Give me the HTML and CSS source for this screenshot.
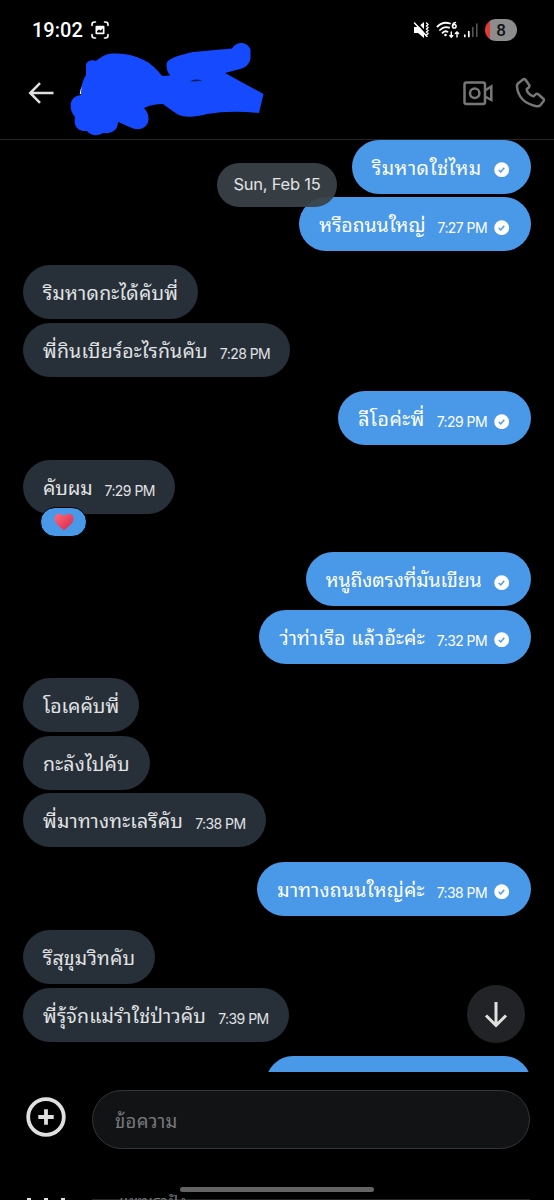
FILE: index.html
```html
<!DOCTYPE html>
<html lang="th">
<head>
<meta charset="utf-8">
<title>Chat</title>
<link rel="stylesheet" href="styles.css">
</head>
<body>
<svg class="defs" width="0" height="0"><defs>
<symbol id="tick" viewBox="0 0 16 16"><circle cx="8" cy="8" r="7.7" fill="#fff"/><path d="M5 8.3l2 2 3.7-4.3" fill="none" stroke="#4a99e9" stroke-width="1.5"/></symbol>
</defs></svg>
<div class="screen">
<header class="top">
  <div class="status">
    <span class="clock">19:02</span>
    <svg class="shot" width="18" height="18" viewBox="0 0 18 18" fill="none" stroke="#fff" stroke-width="1.6" stroke-linecap="round"><path d="M1 4.500V3.500Q1 1 3.500 1H4.500M13.500 1h1Q17 1 17 3.500V4.500M17 13.500v1Q17 17 14.500 17H13.500M4.500 17H3.500Q1 17 1 14.500V13.500"/><path d="M5.500 4.800h7a1 1 0 0 1 1 1v6.400a1 1 0 0 1-1 1h-7a1 1 0 0 1-1-1V5.800a1 1 0 0 1 1-1z" fill="#fff" stroke="none"/><path d="M6 11.500V10l2-1.500 1.500 1L11.800 7.500v4z" fill="#000" stroke="none"/></svg>
    <svg class="sysicons" width="68" height="20" viewBox="0 0 68 20" fill="none" stroke="#fff" stroke-width="1.500" stroke-linecap="round">
      <path d="M1 7h4l6-5v16l-6-5H1z" fill="#fff" stroke="none"/><path d="M2.500 1.500l12.500 13.500" stroke="#000" stroke-width="2"/><path d="M1.500 3l12.500 13.500"/><path d="M13.500 3l1.500 1.500-1.500 1.500L15 7.500 13.500 9l1.500 1.500-1.500 1.500 1.500 1.500-1.500 1.500" stroke-width="1.400"/>
      <path d="M24.500 6.500Q30 1 37 3.500M27 10q4-4.300 9-2.300M29.500 12.800q2.500-2.500 5-1" stroke-width="1.800"/><circle cx="32.500" cy="15" r="1.300" fill="#fff" stroke="none"/>
      <path d="M42.500 2.500Q39.500 3 39.500 6.300"/><circle cx="41.300" cy="6.300" r="1.800"/>
      <path d="M38.300 12v5M36.800 15.500l1.500 1.700 1.500-1.700M44 17v-5M42.300 13.500L44 12l1.600 1.500" stroke-width="1.400"/>
      <path d="M51.800 15v1.500M55.800 11.500v5" stroke-width="1.700"/><path d="M59.800 7.500v9M63.800 4v12.500" stroke="#555" stroke-width="1.600"/>
    </svg>
    <span class="battery">8</span>
  </div>
  <div class="bar">
    <svg class="back" width="26" height="22" viewBox="0 0 26 22" fill="none" stroke="#e0e0e0" stroke-width="2.500"><path d="M12 1.200L2.200 11 12 20.800M2.500 11H25.500"/></svg>
    <svg class="scribble" width="194" height="94" viewBox="70 42 194 94"><path d="M80.500 94q0-4 3-9M82.500 94.500h1" stroke="#fff" stroke-width="1.500" fill="none"/><path fill="#164aff" d="M86 67C85 62 91 59 96 61C104 54 110 53 117 53.500C137 54 152 62 162 76L170 75.500Q165 69 167 62C172 57 180 55 193 52L232 48.500C236 41 248 41 250.500 50V58C250 64 245 68 240 69L225 73L263.500 94L259 113Q230 110 207 114C192 118 182 118 174 112L163 104Q152 104 144 108C151 115 150 127 140 129C133 130 126 125 118 122C118 130 112 134 103 133C96 137 90 135 87 131C78 132 73 126 75 117C68 109 69 96 81 95Q81 82 86 75Z"/><path d="M190 81.500q6-3.500 12-.5z" fill="#052045"/></svg>
    <svg class="video" width="31" height="25" viewBox="0 0 31 25" fill="none" stroke="#777" stroke-width="2.500"><rect x="1.500" y="1.500" width="20.500" height="21.500" rx="2"/><circle cx="11.700" cy="12.200" r="4.700"/><path d="M22 9.500l6.300-4v13.500L22 15.500"/></svg>
    <svg class="phone" width="32" height="32" viewBox="0 0 32 32" fill="none" stroke="#777" stroke-width="2.500" stroke-linejoin="round"><path d="M3 6.500L8 2.500Q9.500 1.500 10.700 3L14 7.700Q15 9.300 13.700 10.500L11.700 12.300Q12 16.500 18.500 19.300L20.700 17.300Q22 16.200 23.300 17.300L28.300 21.700Q29.500 23 28.300 24.500L25.500 28Q24.300 29.700 21.500 29.200Q3.500 25.500 2 9.500Q1.800 7.700 3 6.500z"/></svg>
  </div>
</header>
<main class="thread">
  <div class="day">Sun, Feb 15</div>
  <div class="group out">
    <div class="msg"><span class="text wide">ริมหาดใช่ไหม</span><svg class="tick"><use href="#tick"/></svg></div>
    <div class="msg"><span class="text snug">หรือถนนใหญ่</span><time>7:27 PM</time><svg class="tick"><use href="#tick"/></svg></div>
  </div>
  <div class="group">
    <div class="msg"><span class="text">ริมหาดกะได้คับพี่</span></div>
    <div class="msg"><span class="text">พี่กินเบียร์อะไรกันคับ</span><time>7:28 PM</time></div>
  </div>
  <div class="group out">
    <div class="msg"><span class="text wide">ลีโอค่ะพี่</span><time>7:29 PM</time><svg class="tick"><use href="#tick"/></svg></div>
  </div>
  <div class="group reacted">
    <div class="msg"><span class="text tight">คับผม</span><time>7:29 PM</time><span class="reaction"><svg width="20" height="18" viewBox="0 0 20 18"><defs><linearGradient id="heart" x2="1" y2="1"><stop stop-color="#ff6b79"/><stop offset="1" stop-color="#d52349"/></linearGradient></defs><path d="M10 17.500C6 13.500.5 10.500.5 5.500C.5 0 7.500-1 10 3.500C12.500-1 19.500 0 19.500 5.500C19.500 10.500 14 13.500 10 17.500z" fill="url(#heart)"/></svg></span></div>
  </div>
  <div class="group out">
    <div class="msg"><span class="text tight">หนูถึงตรงที่มันเขียน</span><svg class="tick"><use href="#tick"/></svg></div>
    <div class="msg"><span class="text">ว่าท่าเรือ แล้วอ้ะค่ะ</span><time>7:32 PM</time><svg class="tick"><use href="#tick"/></svg></div>
  </div>
  <div class="group">
    <div class="msg"><span class="text snug">โอเคคับพี่</span></div>
    <div class="msg"><span class="text">กะลังไปคับ</span></div>
    <div class="msg"><span class="text">พี่มาทางทะเลรึคับ</span><time>7:38 PM</time></div>
  </div>
  <div class="group out">
    <div class="msg"><span class="text">มาทางถนนใหญ่ค่ะ</span><time>7:38 PM</time><svg class="tick"><use href="#tick"/></svg></div>
  </div>
  <div class="group">
    <div class="msg"><span class="text">รึสุขุมวิทคับ</span></div>
    <div class="msg"><span class="text">พี่รุ้จักแม่รำใช่ป่าวคับ</span><time>7:39 PM</time></div>
  </div>
  <div class="group out"><div class="msg next"></div></div>
  <button class="down"><svg width="24" height="27" viewBox="0 0 24 27" fill="none" stroke="#e0e0e0" stroke-width="3"><path d="M12 1v23M2 14.500l10 10 10-10"/></svg></button>
</main>
<footer class="composer">
  <svg class="plus" width="40" height="40" viewBox="0 0 40 40" fill="none" stroke="#e0e0e0" stroke-width="3.800"><circle cx="20" cy="20" r="17.800"/><path d="M20 12.300v15.400M12.300 20h15.400"/></svg>
  <div class="field">ข้อความ</div>
</footer>
<div class="edge"><i class="handle"></i><span class="dots"><i></i><i></i><i></i></span><div class="under"></div><span class="peek">แชทเราฝัง</span></div>
</div>
</body>
</html>
```
FILE: styles.css
```css
*{box-sizing:border-box}
body{margin:0;background:#000;color:#e0e2e4;font-family:Inter,"Noto Sans Thai Looped",Loma,Waree,"Noto Sans Thai","Noto Sans",sans-serif}
.defs{position:absolute}
.screen{width:554px;height:1200px;overflow:hidden;display:flex;flex-direction:column;background:#000}
.top{height:139.500px;flex:none;border-bottom:1px solid #242628}
.status{height:60px;display:flex;align-items:center;padding:0 37px 0 32px}
.clock{font:500 20px/24px Roboto,sans-serif;color:#fff;width:50px;white-space:nowrap}
.shot{margin-left:9px}
.sysicons{margin-left:304px;flex:none}
.battery{width:32px;height:22px;margin-left:4px;border-radius:11px;background:linear-gradient(90deg,#e13b38 5px,#8d8d8d 5px);color:#111;font:500 17px/22px Roboto,sans-serif;text-align:center;flex:none}
.bar{height:78px;display:flex;align-items:center;padding-left:28px}
.back{flex:none;margin-top:-12px}
.scribble{flex:none;margin:-21px 0 0 16px}
.video{flex:none;margin:-11px 0 0 199px}
.phone{flex:none;margin:-12px 0 0 21px}
.thread{height:932.500px;flex:none;padding:0 23.500px 0 23px;position:relative;overflow:hidden;display:flex;flex-direction:column;gap:14.400px}
.group{display:flex;flex-direction:column;align-items:flex-start;gap:3.600px;flex:none}
.group.out{align-items:flex-end}
.reacted{margin-bottom:23.900px}
.msg{height:54px;border-radius:27px;background:#273038;display:flex;align-items:baseline;padding:0 20px;white-space:nowrap;position:relative}
.text{font-size:19.500px;line-height:57px;letter-spacing:.2px}
.text.wide{letter-spacing:.45px}
.text.snug{letter-spacing:-.03px}
.text.tight{letter-spacing:-.12px}
.out .msg{background:#4a99e9;color:#fff;padding-right:21px}
time{font-size:14px;letter-spacing:-.55px;margin-left:12px;transform:translateY(1px)}
.tick{width:15.400px;height:15.400px;margin-left:7px;transform:translateY(3px)}
.text + .tick{margin-left:12.500px}
.out .msg.next{width:265px}
.day{position:absolute;z-index:2;left:217px;top:23px;width:120px;height:44px;border-radius:22px;background:rgba(57,65,72,.95);font-size:16.500px;line-height:43px;text-align:center;letter-spacing:-.25px}
.reaction{position:absolute;left:17px;top:47px;width:47px;height:30px;border:1px solid #000;border-radius:15px;background:#4a99e9;display:flex;align-items:center;justify-content:center}
.down{position:absolute;right:29px;top:845.500px;width:58px;height:58px;border:0;border-radius:50%;background:#222326;display:flex;align-items:center;justify-content:center}
.composer{height:77px;flex:none;padding:18px 24px 0 26px;display:flex}
.plus{flex:none;margin-top:7px}
.field{width:438px;height:59px;margin-left:26px;flex:none;border:1.500px solid #343536;border-radius:30px;background:#121315;color:#77797c;font-size:18.500px;line-height:60px;letter-spacing:.3px;padding-left:22px}
.edge{height:51px;flex:none;position:relative;overflow:hidden}
.handle{position:absolute;left:180px;top:38px;width:194px;height:5px;border-radius:3px;background:#646464}
.dots{position:absolute;left:27px;top:49px;display:flex;gap:13px}
.dots i{width:4px;height:4px;background:#ddd}
.under{position:absolute;left:92px;top:50px;width:438px;height:1px;background:#242526}
.peek{position:absolute;left:119px;top:37.500px;font-size:16px;line-height:28px;color:#77797c;white-space:nowrap}
```
